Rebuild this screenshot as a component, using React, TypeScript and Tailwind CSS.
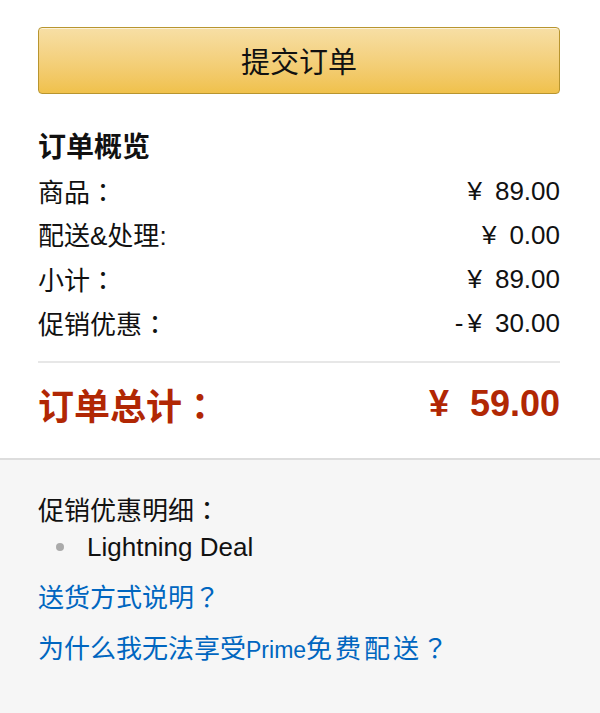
import React from "react";

const LATIN = "font-['Liberation_Sans',Arial,'Noto_Sans_CJK_SC',sans-serif]";
const CJK = "font-['Noto_Sans_CJK_SC','Liberation_Sans',sans-serif]";

function P({ ch }: { ch: string }) {
  return <span className="font-['Noto_Sans_CJK_TC','Noto_Sans_CJK_SC',sans-serif]">{ch}</span>;
}

function Price({ minus, value, big }: { minus?: boolean; value: string; big?: boolean }) {
  return (
    <span className={`flex items-baseline ${LATIN}`}>
      {minus && <span className="mr-[4px]">-</span>}
      <span className={big ? "mr-[21px]" : "mr-[13px]"}>¥</span>
      <span>{value}</span>
    </span>
  );
}

function Row({ label, value, minus }: { label: React.ReactNode; value: string; minus?: boolean }) {
  return (
    <div className="flex h-[44px] items-center justify-between text-[#111]">
      <span className={`text-[26px] leading-[36px] ${CJK}`}>{label}</span>
      <span className="text-[26px] leading-[36px]">
        <Price value={value} minus={minus} />
      </span>
    </div>
  );
}

export default function App() {
  return (
    <div className={`flex h-[713px] w-full flex-col bg-white ${LATIN}`}>
      <div className="pl-[38px] pr-[40px] pt-[27px] pb-[29px]">
        <button
          className={`flex h-[67px] w-full items-center justify-center rounded-[4px] border border-[#b8952f] bg-gradient-to-b from-[#f7dfa5] to-[#f0c14b] text-[29px] text-[#111] shadow-[inset_0_1px_0_rgba(255,255,255,0.6)] ${CJK}`}
        >
          提交订单
        </button>
        <h3 className={`mt-[33px] text-[28px] font-bold leading-[36px] text-[#111] ${CJK}`}>订单概览</h3>
        <div className="mt-[6px]">
          <Row
            label={
              <>
                商品<P ch="：" />
              </>
            }
            value="89.00"
          />
          <Row
            label={
              <>
                配送<span className={LATIN}>&amp;</span>处理<span className={LATIN}>:</span>
              </>
            }
            value="0.00"
          />
          <Row
            label={
              <>
                小计<P ch="：" />
              </>
            }
            value="89.00"
          />
          <Row
            label={
              <>
                促销优惠<P ch="：" />
              </>
            }
            value="30.00"
            minus
          />
        </div>
        <div className="mt-[16px] h-[2px] bg-[#e7e7e7]" />
        <div className="mt-[16px] flex h-[50px] items-center justify-between font-bold text-[#b12704]">
          <span className={`text-[36px] leading-[50px] ${CJK}`}>
            订单总计<P ch="：" />
          </span>
          <span className="text-[36px] leading-[50px]">
            <Price value="59.00" big />
          </span>
        </div>
      </div>
      <div className="flex-1 border-t-2 border-[#dddddd] bg-[#f6f6f6] pl-[38px] pr-[40px] pt-[31px]">
        <div className={`text-[26px] leading-[36px] text-[#111] ${CJK}`}>
          促销优惠明细<P ch="：" />
        </div>
        <ul className="mt-[2px]">
          <li className={`flex h-[36px] items-center text-[26px] text-[#111] ${LATIN}`}>
            <span className="ml-[18px] mr-[23px] inline-block h-[8px] w-[8px] rounded-full bg-[#aaaaaa]" />
            Lightning Deal
          </li>
        </ul>
        <div className={`mt-[13px] text-[26px] leading-[36px] text-[#0066c0] ${CJK}`}>
          送货方式说明<P ch="？" />
        </div>
        <div className={`mt-[15px] text-[26px] leading-[36px] text-[#0066c0] ${CJK}`}>
          为什么我无法享受<span className={`text-[23px] ${LATIN}`}>Prime</span>
          <span className="tracking-[3px]">免费配送</span>
          <P ch="？" />
        </div>
      </div>
    </div>
  );
}
